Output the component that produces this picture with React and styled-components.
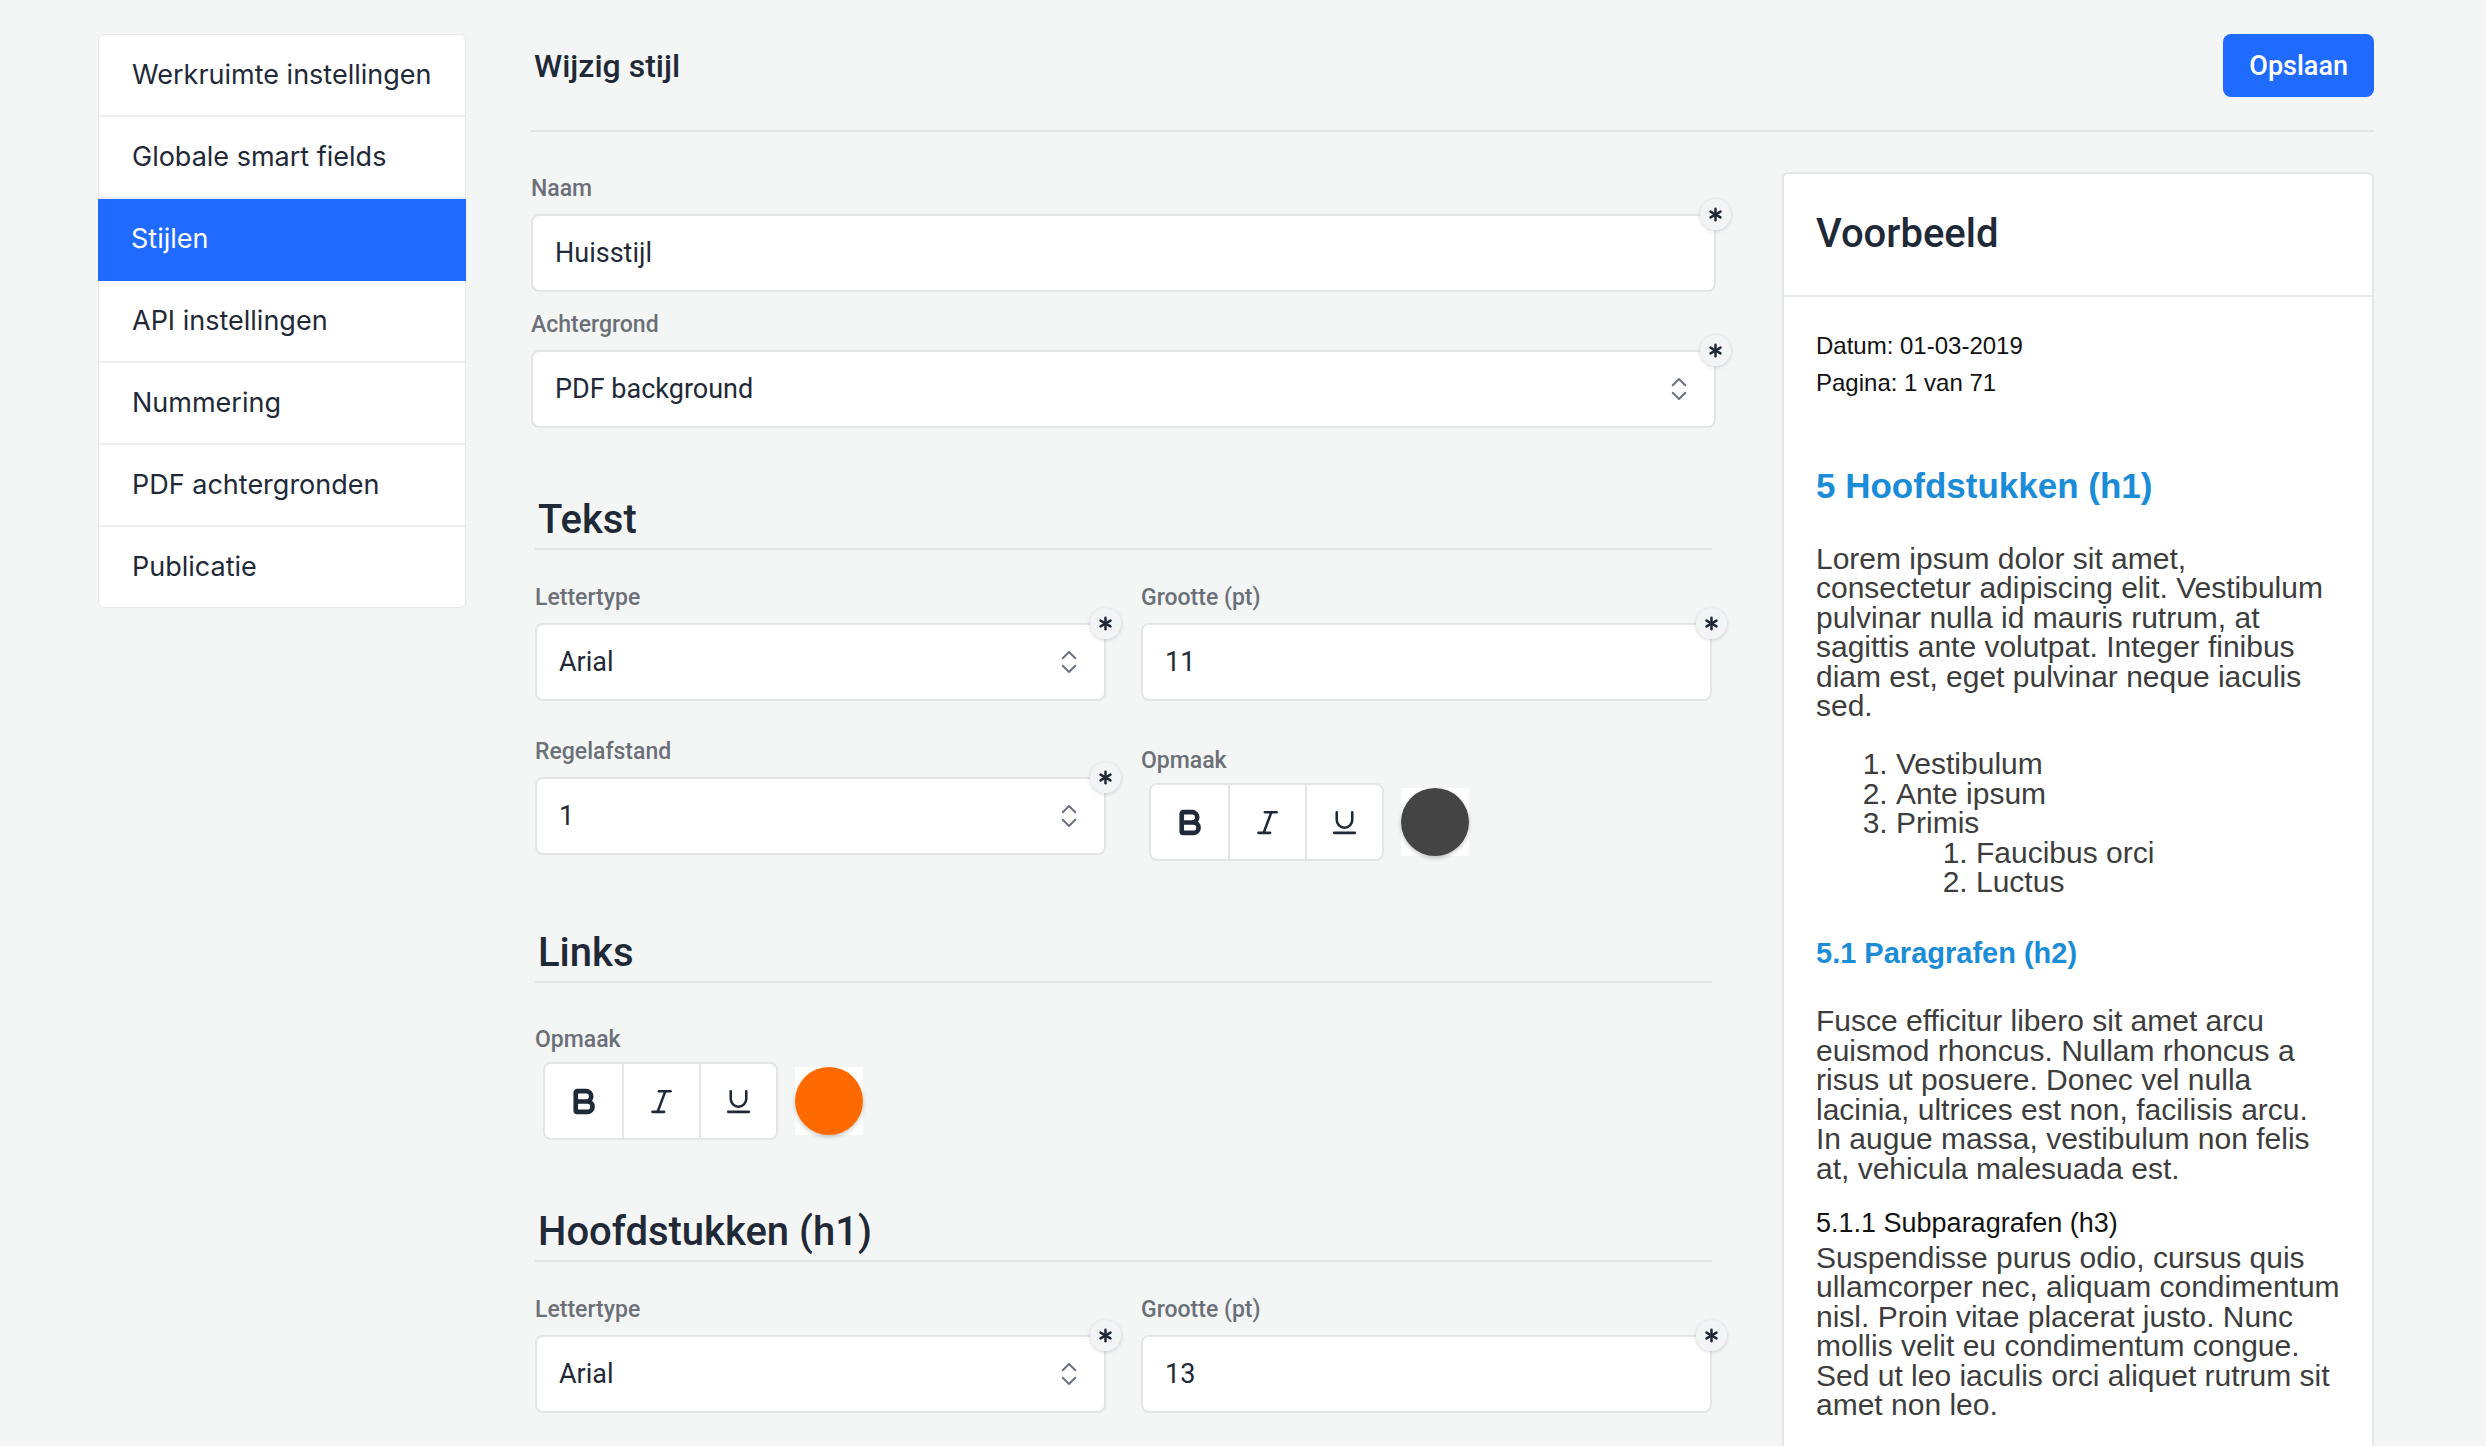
import React from 'react';
import styled, { createGlobalStyle } from 'styled-components';
import { Bold, Italic, Underline, ChevronsUpDown, Asterisk } from 'lucide-react';

const GlobalStyle = createGlobalStyle`
    html, body {
        margin: 0;
        padding: 0;
        background: #f4f5f5;
    }
    body {
        font-family: Roboto, 'Liberation Sans', sans-serif;
        color: #1f2937;
    }
    * {
        box-sizing: border-box;
    }
`;

const Page = styled.div`
    display: flex;
    align-items: flex-start;
    gap: 65px;
    padding: 34px 112px 0 98px;
    min-height: 1446px;
`;

const Sidebar = styled.nav`
    flex: none;
    width: 368px;
    background: #fff;
    border: 1px solid #e6e8ea;
    border-radius: 6px;
`;

const NavItem = styled.div`
    padding: 24px 33px;
    margin: ${({ $active }) => ($active ? '0 -1px' : '0')};
    font-family: Inter, 'Liberation Sans', sans-serif;
    font-size: 27px;
    line-height: 32px;
    color: ${({ $active }) => ($active ? '#fff' : '#1f2937')};
    background: ${({ $active }) => ($active ? '#1f6bff' : 'transparent')};
    border-bottom: 2px solid ${({ $active }) => ($active ? '#1f6bff' : '#eceef0')};

    &:first-child {
        border-radius: 6px 6px 0 0;
    }
    &:last-child {
        border-bottom: 0;
        border-radius: 0 0 6px 6px;
    }
`;

const Main = styled.main`
    flex: 1;
    min-width: 0;
`;

const Header = styled.header`
    display: flex;
    align-items: center;
    justify-content: space-between;
    padding-bottom: 33px;
    border-bottom: 2px solid #e3e5e7;
`;

const Title = styled.h1`
    margin: 0 0 0 3px;
    font-size: 32px;
    line-height: 40px;
    font-weight: 500;
    color: #1f2937;
`;

const PrimaryButton = styled.button`
    height: 63px;
    padding: 0 26px;
    border: 0;
    border-radius: 8px;
    background: #1f6bff;
    color: #fff;
    font-family: Roboto, sans-serif;
    font-size: 27px;
    font-weight: 500;
`;

const Content = styled.div`
    display: grid;
    grid-template-columns: 1fr 592px;
    gap: 66px;
    align-items: start;
    padding-top: 40px;
`;

const FormColumn = styled.div`
    display: flex;
    flex-direction: column;
    padding-top: 4px;
`;

const FieldStack = styled.div`
    display: flex;
    flex-direction: column;
    gap: 20px;
`;

const Field = styled.div`
    display: flex;
    flex-direction: column;
    padding-top: ${({ $offset }) => $offset || 0}px;
`;

const Label = styled.label`
    margin-bottom: ${({ $tight }) => ($tight ? 9 : 12)}px;
    font-size: 23px;
    line-height: 26px;
    font-weight: 500;
    color: #6b7078;
`;

const Control = styled.div`
    position: relative;
    display: flex;
    align-items: center;
    height: 78px;
    padding: 0 20px 0 22px;
    background: #fff;
    border: 2px solid #e3e5e7;
    border-radius: 8px;
    font-size: 27px;
    color: #1f2937;

    svg {
        color: #6b7280;
    }
`;

const Value = styled.span`
    flex: 1;
`;

const Required = styled.span`
    position: absolute;
    top: -17px;
    right: -17px;
    width: 31px;
    height: 31px;
    display: flex;
    align-items: center;
    justify-content: center;
    border-radius: 50%;
    background: #f3f4f6;
    box-shadow: 0 1px 4px rgba(0, 0, 0, 0.16);

    && svg {
        color: #1f2937;
    }
`;

const Section = styled.section`
    margin: 70px 4px 0;
`;

const SectionTitle = styled.h2`
    margin: 0;
    padding: 0 0 6px 3px;
    font-size: 40px;
    line-height: 44px;
    font-weight: 500;
    color: #1f2937;
    border-bottom: 2px solid #e3e5e7;
`;

const SectionGrid = styled.div`
    display: grid;
    grid-template-columns: 1fr 1fr;
    column-gap: 35px;
    row-gap: 38px;
    margin-top: 35px;
`;

const FormatRow = styled.div`
    display: flex;
    align-items: center;
    gap: 17px;
    margin-left: 8px;
`;

const ToggleGroup = styled.div`
    display: flex;
    background: #fff;
    border: 2px solid #e3e5e7;
    border-radius: 8px;
    overflow: hidden;
`;

const Toggle = styled.span`
    width: 77px;
    height: 74px;
    display: flex;
    align-items: center;
    justify-content: center;
    color: #1f2937;

    & + & {
        border-left: 2px solid #e3e5e7;
    }
`;

const Swatch = styled.span`
    width: 68px;
    height: 68px;
    background: #fff;
    display: flex;

    &::after {
        content: '';
        flex: 1;
        border-radius: 50%;
        background: ${({ $color }) => $color};
        box-shadow: 0 2px 4px rgba(0, 0, 0, 0.22);
    }
`;

const Preview = styled.aside`
    background: #fff;
    border: 2px solid #e4e6e8;
    border-radius: 6px;
`;

const PreviewHeader = styled.div`
    padding: 37px 32px 38px;
    border-bottom: 2px solid #e4e6e8;
    font-size: 40px;
    line-height: 46px;
    font-weight: 500;
    color: #1f2937;
`;

const PreviewBody = styled.div`
    padding: 30px 32px 60px;
    font-family: 'Liberation Sans', Arial, sans-serif;
    color: #3d3d3d;
`;

const Meta = styled.div`
    font-size: 24px;
    line-height: 37px;
    color: #111;
`;

const DocH1 = styled.div`
    margin-top: 65px;
    font-size: 35px;
    line-height: 40px;
    font-weight: 700;
    color: #1a8cd8;
`;

const DocH2 = styled.div`
    margin-top: 40px;
    font-size: 29px;
    line-height: 34px;
    font-weight: 700;
    color: #1a8cd8;
`;

const DocH3 = styled.div`
    margin-top: 25px;
    font-size: 27px;
    line-height: 30px;
    color: #111;
`;

const Para = styled.p`
    margin: ${({ $gap }) => $gap}px 0 0;
    font-size: 30px;
    line-height: 29.4px;
`;

const DocList = styled.ol`
    margin: ${({ $gap }) => $gap || 0}px 0 0;
    padding-left: 80px;
    font-size: 30px;
    line-height: 29.4px;
`;

const RequiredBadge = () => (
    <Required>
        <Asterisk size={23} strokeWidth={2.6} />
    </Required>
);

const TextField = ({ label, value, required }) => (
    <Field>
        <Label>{label}</Label>
        <Control>
            <Value>{value}</Value>
            {required && <RequiredBadge />}
        </Control>
    </Field>
);

const SelectField = ({ label, value, required }) => (
    <Field>
        <Label>{label}</Label>
        <Control>
            <Value>{value}</Value>
            <ChevronsUpDown size={30} strokeWidth={1.6} />
            {required && <RequiredBadge />}
        </Control>
    </Field>
);

const FormatField = ({ color }) => (
    <Field $offset={9}>
        <Label $tight>Opmaak</Label>
        <FormatRow>
            <ToggleGroup>
                <Toggle>
                    <Bold size={31} strokeWidth={3.6} />
                </Toggle>
                <Toggle>
                    <Italic size={31} strokeWidth={2} />
                </Toggle>
                <Toggle>
                    <Underline size={31} strokeWidth={2} />
                </Toggle>
            </ToggleGroup>
            <Swatch $color={color} />
        </FormatRow>
    </Field>
);

const navItems = [
    'Werkruimte instellingen',
    'Globale smart fields',
    'Stijlen',
    'API instellingen',
    'Nummering',
    'PDF achtergronden',
    'Publicatie',
];

const App = () => {
    return (
        <>
            <GlobalStyle />
            <Page>
                <Sidebar>
                    {navItems.map((item) => (
                        <NavItem key={item} $active={item === 'Stijlen'}>
                            {item}
                        </NavItem>
                    ))}
                </Sidebar>
                <Main>
                    <Header>
                        <Title>Wijzig stijl</Title>
                        <PrimaryButton>Opslaan</PrimaryButton>
                    </Header>
                    <Content>
                        <FormColumn>
                            <FieldStack>
                                <TextField label="Naam" value="Huisstijl" required />
                                <SelectField label="Achtergrond" value="PDF background" required />
                            </FieldStack>

                            <Section>
                                <SectionTitle>Tekst</SectionTitle>
                                <SectionGrid>
                                    <SelectField label="Lettertype" value="Arial" required />
                                    <TextField label="Grootte (pt)" value="11" required />
                                    <SelectField label="Regelafstand" value="1" required />
                                    <FormatField color="#444444" />
                                </SectionGrid>
                            </Section>

                            <Section>
                                <SectionTitle>Links</SectionTitle>
                                <SectionGrid>
                                    <FormatField color="#ff6a00" />
                                </SectionGrid>
                            </Section>

                            <Section>
                                <SectionTitle>Hoofdstukken (h1)</SectionTitle>
                                <SectionGrid>
                                    <SelectField label="Lettertype" value="Arial" required />
                                    <TextField label="Grootte (pt)" value="13" required />
                                    <SelectField label="Regelafstand" value="1" required />
                                    <FormatField color="#1a8cd8" />
                                </SectionGrid>
                            </Section>
                        </FormColumn>

                        <Preview>
                            <PreviewHeader>Voorbeeld</PreviewHeader>
                            <PreviewBody>
                                <Meta>Datum: 01-03-2019</Meta>
                                <Meta>Pagina: 1 van 71</Meta>
                                <DocH1>5 Hoofdstukken (h1)</DocH1>
                                <Para $gap={38}>
                                    Lorem ipsum dolor sit amet, consectetur adipiscing elit. Vestibulum
                                    pulvinar nulla id mauris rutrum, at sagittis ante volutpat. Integer
                                    finibus diam est, eget pulvinar neque iaculis sed.
                                </Para>
                                <DocList $gap={29}>
                                    <li>Vestibulum</li>
                                    <li>Ante ipsum</li>
                                    <li>
                                        Primis
                                        <DocList>
                                            <li>Faucibus orci</li>
                                            <li>Luctus</li>
                                        </DocList>
                                    </li>
                                </DocList>
                                <DocH2>5.1 Paragrafen (h2)</DocH2>
                                <Para $gap={36}>
                                    Fusce efficitur libero sit amet arcu euismod rhoncus. Nullam rhoncus a
                                    risus ut posuere. Donec vel nulla lacinia, ultrices est non, facilisis
                                    arcu. In augue massa, vestibulum non felis at, vehicula malesuada est.
                                </Para>
                                <DocH3>5.1.1 Subparagrafen (h3)</DocH3>
                                <Para $gap={5}>
                                    Suspendisse purus odio, cursus quis ullamcorper nec, aliquam
                                    condimentum nisl. Proin vitae placerat justo. Nunc mollis velit eu
                                    condimentum congue. Sed ut leo iaculis orci aliquet rutrum sit amet
                                    non leo.
                                </Para>
                            </PreviewBody>
                        </Preview>
                    </Content>
                </Main>
            </Page>
        </>
    );
};

export default App;
